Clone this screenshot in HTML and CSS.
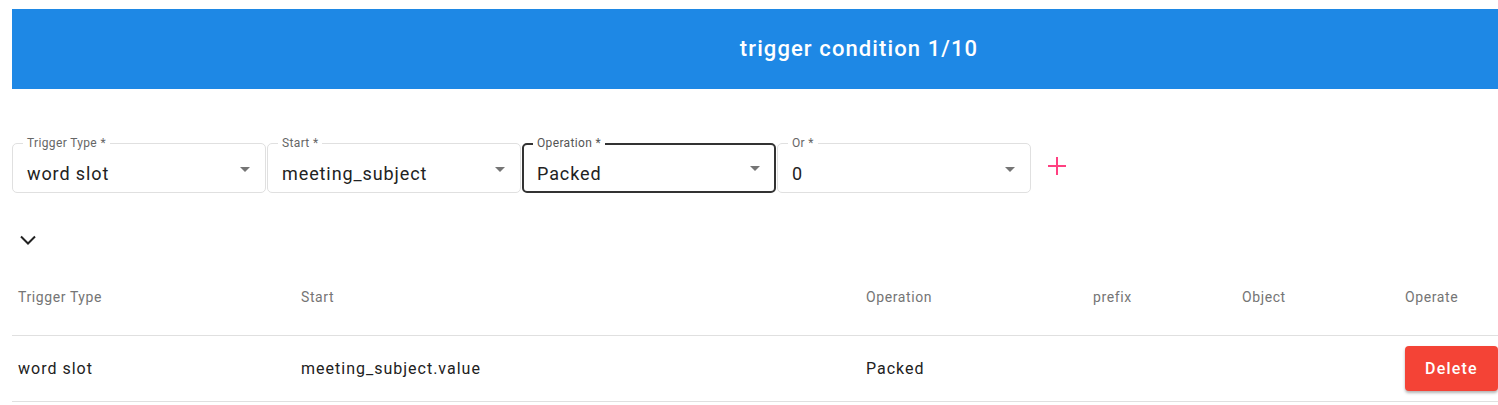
FILE: index.html
```html
<!DOCTYPE html>
<html>
<head>
<meta charset="utf-8">
<link rel="stylesheet" href="styles.css">
</head>
<body>
<div class="page">
  <div class="banner">trigger condition 1/10</div>

  <div class="fields">
    <div class="field">
      <span class="label">Trigger Type *</span>
      <span class="value">word slot</span>
      <span class="caret"></span>
    </div>
    <div class="field">
      <span class="label">Start *</span>
      <span class="value">meeting_subject</span>
      <span class="caret"></span>
    </div>
    <div class="field focused">
      <span class="label">Operation *</span>
      <span class="value">Packed</span>
      <span class="caret"></span>
    </div>
    <div class="field">
      <span class="label">Or *</span>
      <span class="value">0</span>
      <span class="caret"></span>
    </div>
    <svg class="plus" width="20" height="20" viewBox="0 0 20 20"><path d="M10 1v18M1 10h18" stroke="#ff4081" stroke-width="2" fill="none"/></svg>
  </div>

  <div class="toggle">
    <svg width="16" height="10" viewBox="0 0 16 10"><path d="M1 1.5l7 7 7-7" stroke="#222" stroke-width="2" fill="none"/></svg>
  </div>

  <div class="table">
    <div class="row head">
      <div class="cell">Trigger Type</div>
      <div class="cell">Start</div>
      <div class="cell">Operation</div>
      <div class="cell">prefix</div>
      <div class="cell">Object</div>
      <div class="cell">Operate</div>
    </div>
    <div class="row body">
      <div class="cell">word slot</div>
      <div class="cell">meeting_subject.value</div>
      <div class="cell">Packed</div>
      <div class="cell"></div>
      <div class="cell"></div>
      <div class="cell"><button class="delete">Delete</button></div>
    </div>
  </div>
</div>
</body>
</html>
```

FILE: styles.css
```css
html, body {
  margin: 0;
  padding: 0;
  background: #fff;
  overflow: hidden;
}
body {
  font-family: Roboto, "Liberation Sans", Arial, sans-serif;
  color: #212121;
}
.page {
  padding: 9px 0 0 12px;
}
.banner {
  height: 80px;
  background: #1e88e5;
  color: #fff;
  font-size: 22px;
  font-weight: 500;
  letter-spacing: 1.1px;
  line-height: 80px;
  text-align: center;
  padding-left: 208px;
}
.fields {
  margin-top: 54px;
  display: flex;
  align-items: center;
  gap: 1px;
}
.field {
  position: relative;
  box-sizing: border-box;
  width: 254px;
  height: 50px;
  border: 1px solid #e0e0e0;
  border-radius: 5px;
  padding: 11px 15px 0 14px;
  display: flex;
  align-items: center;
}
.field.focused {
  border: 2px solid #333;
  padding: 10px 14px 0 13px;
}
.label {
  position: absolute;
  top: -9px;
  left: 10px;
  padding: 0 4px;
  background: #fff;
  font-size: 12px;
  letter-spacing: 0.35px;
  line-height: 16px;
  color: #666;
}
.field.focused .label {
  top: -10px;
  left: 9px;
  color: #555;
}
.value {
  font-size: 18px;
  letter-spacing: 0.9px;
  color: #222;
  flex: 1;
}
.caret {
  width: 0;
  height: 0;
  border-left: 5px solid transparent;
  border-right: 5px solid transparent;
  border-top: 5px solid #757575;
  margin-top: -9px;
}
.plus {
  margin-left: 15px;
  margin-top: -5px;
}
.toggle {
  margin-top: 36px;
  height: 22px;
  display: flex;
  align-items: center;
  padding-left: 8px;
}
.toggle svg {
  display: block;
}
.table {
  margin-top: 8px;
}
.row {
  display: grid;
  grid-template-columns: 283px 565px 227px 149px 163px 1fr;
  align-items: center;
  border-bottom: 1px solid #e0e0e0;
}
.row.head {
  height: 76px;
  font-size: 14px;
  letter-spacing: 0.6px;
  color: #757575;
}
.row.body {
  height: 65px;
  font-size: 16px;
  letter-spacing: 1px;
  color: #212121;
}
.cell {
  padding-left: 6px;
  white-space: nowrap;
}
.delete {
  font-family: Roboto, "Liberation Sans", Arial, sans-serif;
  width: 93px;
  height: 45px;
  border: none;
  border-radius: 4px;
  background: #f44336;
  color: #fff;
  font-size: 16px;
  font-weight: 500;
  letter-spacing: 1.2px;
  box-shadow: 0 2px 3px rgba(0,0,0,0.3);
  cursor: pointer;
}
```
